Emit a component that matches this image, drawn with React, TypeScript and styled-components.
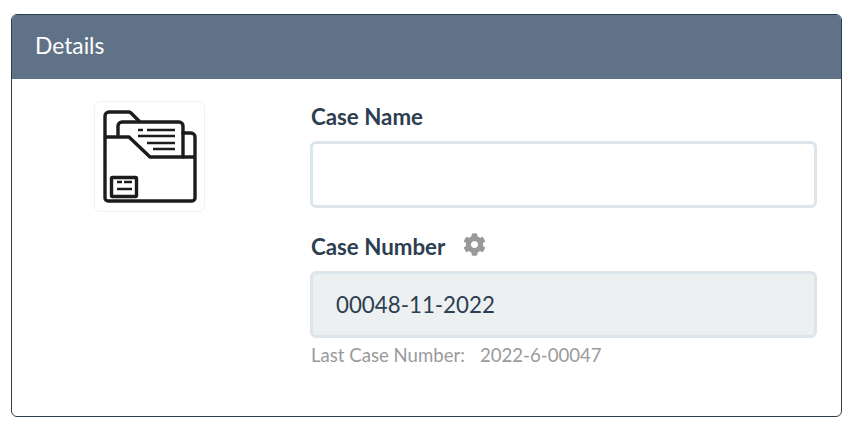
import React from "react";
import styled, { createGlobalStyle } from "styled-components";
import { FaCog } from "react-icons/fa";

const Global = createGlobalStyle`
  html, body { margin: 0; padding: 0; background: #fff; }
  body { font-family: Lato, "Open Sans", sans-serif; }
`;
const Page = styled.div`
  padding: 14px 7px 0 11px;
`;
const Card = styled.section`
  box-sizing: border-box;
  width: 831px;
  height: 403px;
  border: 1px solid #2c3e50;
  border-radius: 6px;
  overflow: hidden;
`;
const Header = styled.header`
  box-sizing: border-box;
  height: 64px;
  background: #607287;
  color: #fff;
  font-size: 22.8px;
  line-height: 61px;
  padding-left: 23px;
`;
const Body = styled.div`
  display: flex;
  padding: 22px 24px 0 82px;
`;
const IconBox = styled.div`
  box-sizing: border-box;
  width: 111px;
  height: 111px;
  border: 1px solid #f1f1f1;
  border-radius: 6px;
  flex: none;
  margin-right: 105px;
`;
const Form = styled.div`
  flex: 1;
  display: flex;
  flex-direction: column;
  padding-top: 1px;
`;
const Label = styled.label`
  display: flex;
  align-items: center;
  box-sizing: border-box;
  font-size: 22.3px;
  font-weight: 700;
  color: #2c3e50;
  line-height: 28px;
  height: 28px;
  padding: 2px 0 0 1px;
  margin-bottom: 11px;
`;
const Gear = styled.span`
  display: inline-flex;
  color: #999;
  margin-left: 18px;
  margin-top: -5px;
  font-size: 23px;
`;
const Field = styled.div<{ $readonly?: boolean }>`
  box-sizing: border-box;
  height: 67px;
  border: 3px solid #dce4ec;
  border-radius: 6px;
  background: ${(p) => (p.$readonly ? "#ecf0f1" : "#fff")};
  color: #2c3e50;
  font-size: 22.3px;
  line-height: 61px;
  padding-left: 23px;
  margin-bottom: ${(p) => (p.$readonly ? "0" : "24px")};
`;
const Help = styled.div`
  display: flex;
  gap: 15px;
  font-size: 18.6px;
  color: #9a9a9a;
  line-height: 24px;
  margin-top: 5px;
  padding-left: 1px;
`;

const FolderIcon = () => (
  <svg width="109" height="109" viewBox="0 0 109 109" fill="none" stroke="#1c1c1c" strokeWidth="3.4" strokeLinejoin="round" strokeLinecap="round" style={{ display: "block" }}>
    <path d="M10 34V14a4 4 0 0 1 4-4h20a3 3 0 0 1 2 1l8 8" />
    <path d="M23 33V24a4 4 0 0 1 4-4h57a4 4 0 0 1 4 4v31" />
    <path d="M88 31h8a4 4 0 0 1 4 4v61a3 3 0 0 1-3 3H13a3 3 0 0 1-3-3V35h24l21 20h45" />
    <rect x="16.5" y="75.5" width="25" height="19" rx="1" />
    <path strokeWidth="2.6" strokeLinecap="butt" d="M43 28h5M52 28h28M43 34h37M52 41h28M58 47h22M22 80h5M29 80h8M22 87h15" />
  </svg>
);

export default function App() {
  return (
    <Page>
      <Global />
      <Card>
        <Header>Details</Header>
        <Body>
          <IconBox>
            <FolderIcon />
          </IconBox>
          <Form>
            <Label>Case Name</Label>
            <Field />
            <Label>
              Case Number
              <Gear>
                <FaCog />
              </Gear>
            </Label>
            <Field $readonly>00048-11-2022</Field>
            <Help>
              <span>Last Case Number:</span>
              <span>2022-6-00047</span>
            </Help>
          </Form>
        </Body>
      </Card>
    </Page>
  );
}
